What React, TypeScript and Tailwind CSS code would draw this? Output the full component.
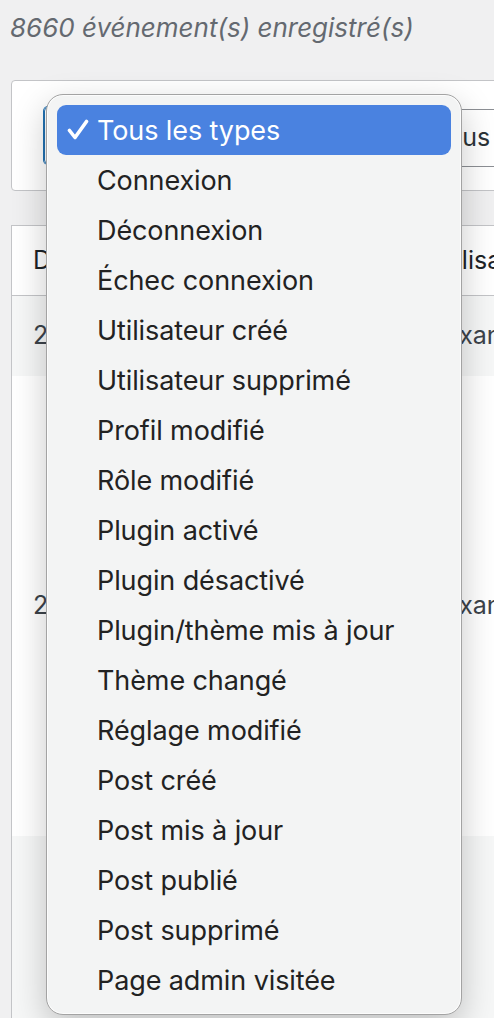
const types = [
  'Tous les types',
  'Connexion',
  'Déconnexion',
  'Échec connexion',
  'Utilisateur créé',
  'Utilisateur supprimé',
  'Profil modifié',
  'Rôle modifié',
  'Plugin activé',
  'Plugin désactivé',
  'Plugin/thème mis à jour',
  'Thème changé',
  'Réglage modifié',
  'Post créé',
  'Post mis à jour',
  'Post publié',
  'Post supprimé',
  'Page admin visitée',
];

const CheckIcon = () => (
  <svg width="22" height="22" viewBox="0 0 22 22" fill="none">
    <path
      d="M2.5 11.5 L8 18.5 L19.5 2.5"
      stroke="white"
      strokeWidth="3.6"
      strokeLinecap="round"
      strokeLinejoin="round"
    />
  </svg>
);

const TypeMenu = () => (
  <div className="absolute left-[46px] top-[94px] w-[416px] rounded-[17px] border border-[#a3a3a3] bg-[#f3f4f4] px-[10px] pt-[10px] pb-[9px] shadow-[0_12px_34px_rgba(0,0,0,0.22),inset_0_0_0_1px_rgba(255,255,255,0.7)]">
    {types.map((label, i) => (
      <div
        key={label}
        className={
          i === 0
            ? 'flex h-[50px] items-center rounded-[9px] bg-[#4a82e0] text-white'
            : 'flex h-[50px] items-center text-[#222222]'
        }
      >
        <span className="flex w-[40px] shrink-0 pl-[10px]">{i === 0 && <CheckIcon />}</span>
        <span className="text-[27px] leading-none tracking-[-0.1px]">{label}</span>
      </div>
    ))}
  </div>
);

export default function App() {
  return (
    <div className="relative h-[1018px] overflow-hidden bg-[#f0f0f1] font-['Inter','Liberation_Sans',sans-serif]">
      <div className="w-[760px] pl-[11px]">
        <p className="-ml-px pt-[13px] text-[26px] italic leading-[30px] text-[#646970]">
          8660 événement(s) enregistré(s)
        </p>

        <div className="mt-[37px] flex h-[111px] items-center gap-[6px] rounded-[4px] border border-[#c3c4c7] bg-white pl-[32px]">
          <div className="h-[57px] w-[370px] rounded-[4px] border border-[#2271b1] shadow-[0_0_0_1px_#2271b1]" />
          <div className="mt-[4px] flex h-[58px] w-[300px] items-center rounded-[4px] border border-[#8c8f94] pl-[12px] text-[25px] text-[#2c3338]">
            Tous les acteurs
          </div>
        </div>

        <div className="mt-[34px] border-l border-t border-[#c3c4c7] bg-white text-[25px]">
          <div className="flex h-[70px] items-center border-b border-[#c3c4c7] text-[#1d2327]">
            <div className="w-[417px] pl-[21px]">Date</div>
            <div>Utilisateur</div>
          </div>
          <div className="flex h-[80px] items-center bg-[#f6f7f7] text-[#3c434a]">
            <div className="w-[417px] pl-[21px]">2025-01-14 10:32</div>
            <div>Roxane</div>
          </div>
          <div className="flex h-[460px] items-center bg-white text-[#3c434a]">
            <div className="w-[417px] pl-[21px]">2025-01-14 10:28</div>
            <div>Roxane</div>
          </div>
          <div className="h-[200px] bg-[#f6f7f7]" />
        </div>
      </div>

      <TypeMenu />
    </div>
  );
}
